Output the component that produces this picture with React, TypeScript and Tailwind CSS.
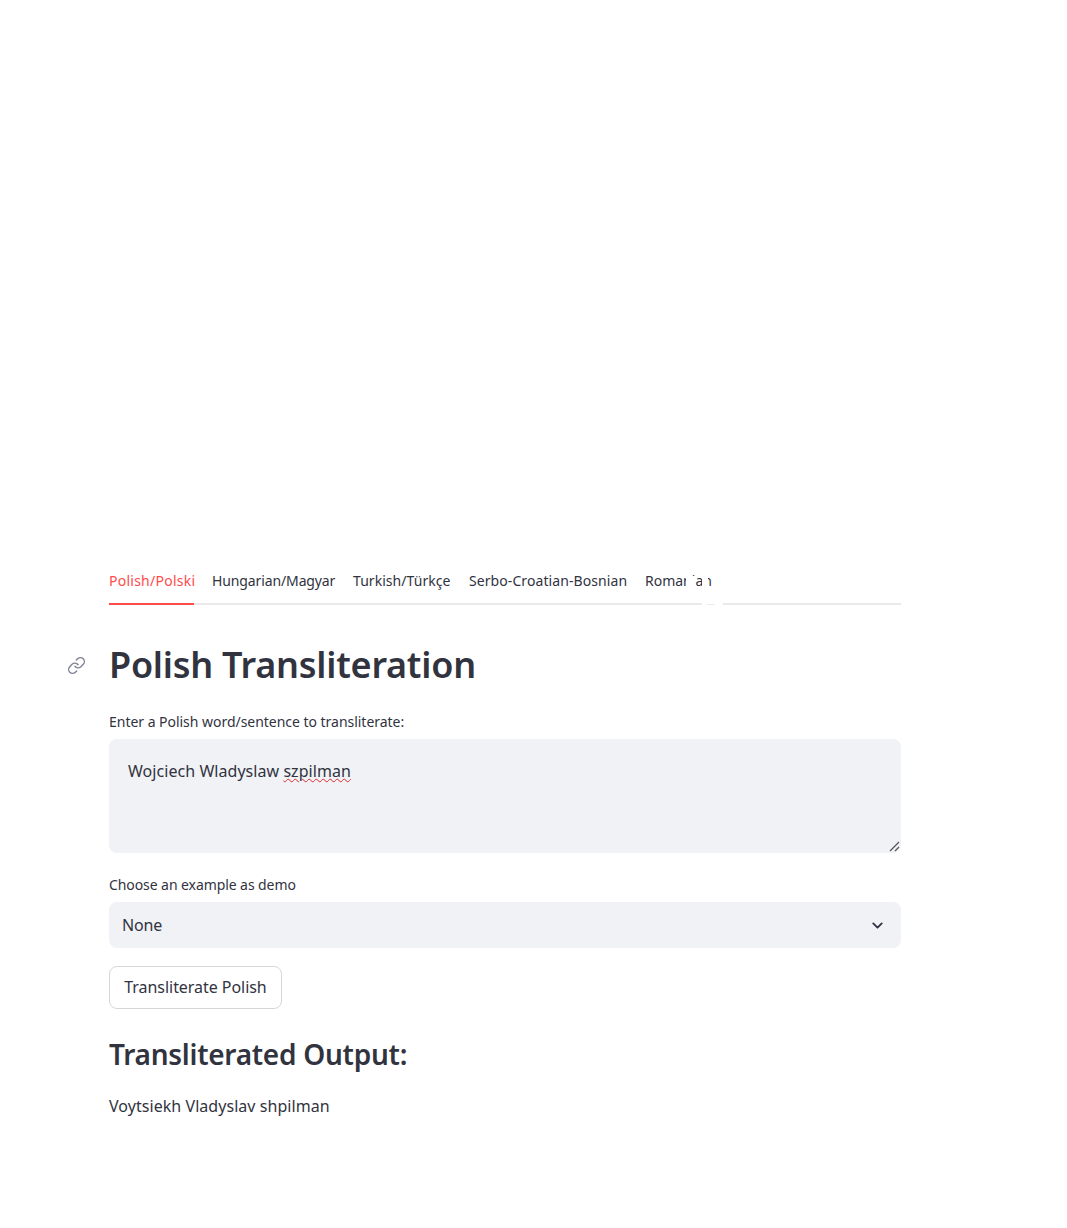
import { ChevronDown, Link } from "lucide-react";

const tabs = [
  { label: "Polish/Polski", width: "w-[85px] tracking-[0.25px]" },
  { label: "Hungarian/Magyar", width: "w-[123px] tracking-[-0.12px]" },
  { label: "Turkish/Türkçe", width: "w-[98px] tracking-[0.05px]" },
  { label: "Serbo-Croatian-Bosnian", width: "w-[158px] tracking-[0.08px]" },
  { label: "Romanian", width: "w-[67px]" },
];

export default function App() {
  return (
    <div className="min-h-[1228px] bg-white pl-[109px] pt-[564px] text-[#31333f] font-['Noto_Sans',sans-serif]">
      <div className="w-[792px]">
        <div className="relative flex h-[41px] gap-[18px] border-b-2 border-[#eaeaec]">
          {tabs.map((tab, i) => (
            <div
              key={tab.label}
              className={`-mb-[2px] h-[41px] pt-[6px] text-[14px] leading-[21px] whitespace-nowrap ${tab.width} ${
                i === 0 ? "border-b-2 border-[#ff4b4b] text-[#ff4b4b]" : ""
              }`}
            >
              {tab.label}
            </div>
          ))}
          <div className="absolute left-[577px] top-[8px] flex h-[16px]">
            <div className="h-full w-[5px] bg-white" />
            <div className="mt-[4px] h-[12px] w-[4px] bg-white" />
            <div className="w-[7px]" />
            <div className="h-full w-[6px] bg-white" />
          </div>
          <div className="absolute left-[593px] top-[39px] flex h-[2px]">
            <div className="h-full w-[5px] bg-white" />
            <div className="h-[1px] w-[8px] bg-white" />
            <div className="h-full w-[8px] bg-white" />
          </div>
        </div>

        <div className="relative mt-[38px]">
          <Link className="absolute -left-[42px] top-[13px] h-[19px] w-[19px] text-[#808495]" strokeWidth={1.8} />
          <h1 className="text-[36px] leading-[44px] font-semibold tracking-[-0.24px]">Polish Transliteration</h1>
        </div>

        <label className="mt-[24px] block text-[14px] leading-[21px] tracking-[-0.03px]">Enter a Polish word/sentence to transliterate:</label>
        <div className="relative mt-[7px] h-[114px] rounded-lg bg-[#f0f2f6] px-[19px] py-[21px] text-[16px] leading-[22px] tracking-[0.05px]">
          Wojciech Wladyslaw{" "}
          <span className="underline decoration-wavy decoration-[#e0282e] decoration-1">szpilman</span>
          <svg className="absolute bottom-[1px] right-[1px] h-[12px] w-[12px]" viewBox="0 0 12 12" fill="none" stroke="#555">
            <path d="M2 11 11 2M7 11l4-4" strokeWidth="1.2" />
          </svg>
        </div>

        <label className="mt-[21px] block text-[14px] leading-[21px] tracking-[-0.08px]">Choose an example as demo</label>
        <div className="mt-[7px] flex h-[46px] items-center justify-between rounded-lg bg-[#f0f2f6] pl-[13px] pr-[15px] text-[16px] tracking-[-0.2px]">
          <span>None</span>
          <ChevronDown className="h-[17px] w-[17px]" strokeWidth={2.6} />
        </div>

        <button className="mt-[18px] block h-[43px] w-[173px] rounded-lg border border-[#d5d6da] bg-white pb-[2px] text-[16px] tracking-[-0.05px]">
          Transliterate Polish
        </button>

        <h2 className="mt-[27px] text-[28px] leading-[36px] font-semibold tracking-[-0.27px]">Transliterated Output:</h2>
        <p className="mt-[22px] text-[16px] leading-[24px] tracking-[0.05px]">Voytsiekh Vladyslav shpilman</p>
      </div>
    </div>
  );
}
